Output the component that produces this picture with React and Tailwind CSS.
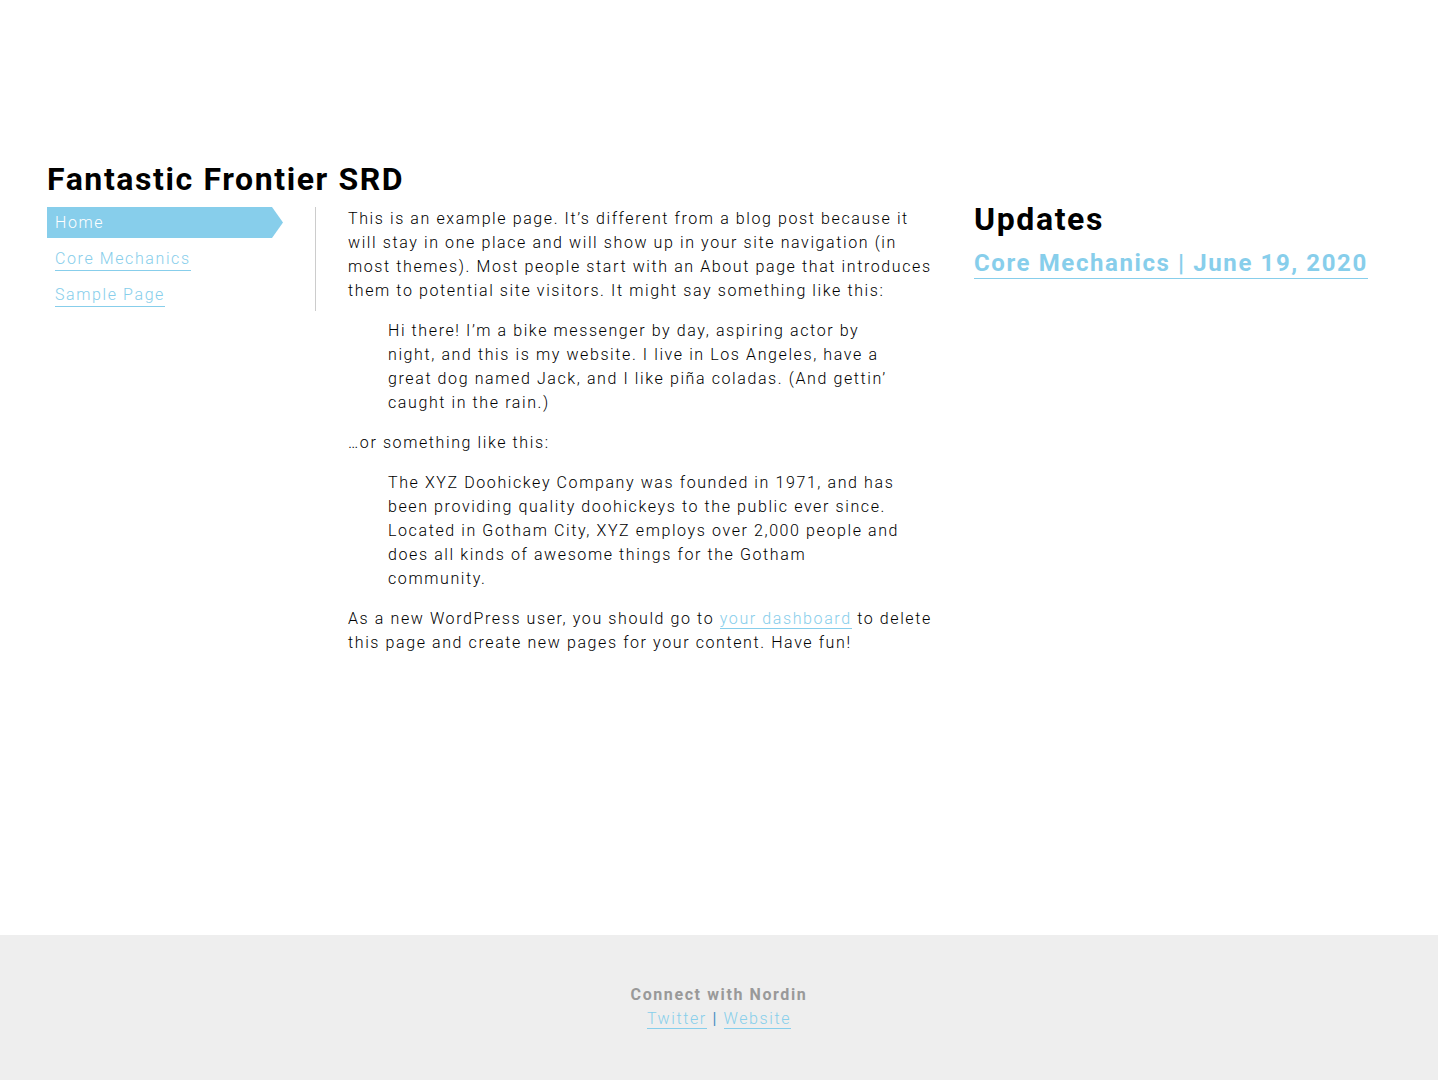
export default function App() {
  const font = { fontFamily: 'Roboto, "Liberation Sans", sans-serif' }
  return (
    <div className="min-h-[1080px] flex flex-col bg-white text-black tracking-[0.1rem]" style={font}>
      <div className="flex-1 px-[47px] pt-[159px]">
        <h1 className="text-[32px] leading-[40px] font-bold">Fantastic Frontier SRD</h1>
        <div className="flex mt-[8px]">
          {/* navigation */}
          <nav className="w-[269px] shrink-0 border-r border-[#cccccc] pr-[33px] h-[104px]">
            <div
              className="h-[31px] bg-[#87ceeb] text-white font-light text-[16px] leading-[31px] pl-[8px] w-[236px]"
              style={{ clipPath: 'polygon(0 0, 225px 0, 236px 50%, 225px 100%, 0 100%)' }}
            >
              Home
            </div>
            <div className="pl-[8px] mt-[9px] flex flex-col gap-[12px] items-start">
              <a className="text-[#87ceeb] font-light text-[16px] leading-[23px] border-b border-[#87ceeb]">Core Mechanics</a>
              <a className="text-[#87ceeb] font-light text-[16px] leading-[23px] border-b border-[#87ceeb]">Sample Page</a>
            </div>
          </nav>

          {/* main content */}
          <main className="w-[626px] shrink-0 pl-[32px] font-light text-[16px] leading-[24px]">
            <p>
              This is an example page. It’s different from a blog post because it will stay in one place and will show up in your site navigation (in most themes). Most people start with an About page that introduces them to potential site visitors. It might say something like this:
            </p>
            <blockquote className="my-[16px] pl-[40px] pr-[40px]">
              <p>
                Hi there! I’m a bike messenger by day, aspiring actor by night, and this is my website. I live in Los Angeles, have a great dog named Jack, and I like piña coladas. (And gettin’ caught in the rain.)
              </p>
            </blockquote>
            <p>…or something like this:</p>
            <blockquote className="my-[16px] pl-[40px] pr-[40px]">
              <p>
                The XYZ Doohickey Company was founded in 1971, and has been providing quality doohickeys to the public ever since. Located in Gotham City, XYZ employs over 2,000 people and does all kinds of awesome things for the Gotham community.
              </p>
            </blockquote>
            <p>
              As a new WordPress user, you should go to{' '}
              <a className="text-[#87ceeb] border-b border-[#87ceeb]">your dashboard</a> to delete this page and create new pages for your content. Have fun!
            </p>
          </main>

          {/* sidebar */}
          <aside className="pl-[32px] -mt-[8px]">
            <h2 className="text-[32px] leading-[40px] font-bold">Updates</h2>
            <a className="inline-block mt-[9px] text-[#87ceeb] font-bold text-[24px] leading-[30px] border-b border-[#87ceeb]">
              Core Mechanics | June 19, 2020
            </a>
          </aside>
        </div>
      </div>

      {/* footer */}
      <footer className="h-[145px] bg-[#eeeeee] flex flex-col items-center pt-[48px] text-[16px] leading-[24px]">
        <div className="font-bold text-[#999999]">Connect with Nordin</div>
        <div className="font-light text-[#87ceeb]">
          <a className="border-b border-[#87ceeb]">Twitter</a>
          <span className="text-[#4a90c2] font-normal"> | </span>
          <a className="border-b border-[#87ceeb]">Website</a>
        </div>
      </footer>
    </div>
  )
}
